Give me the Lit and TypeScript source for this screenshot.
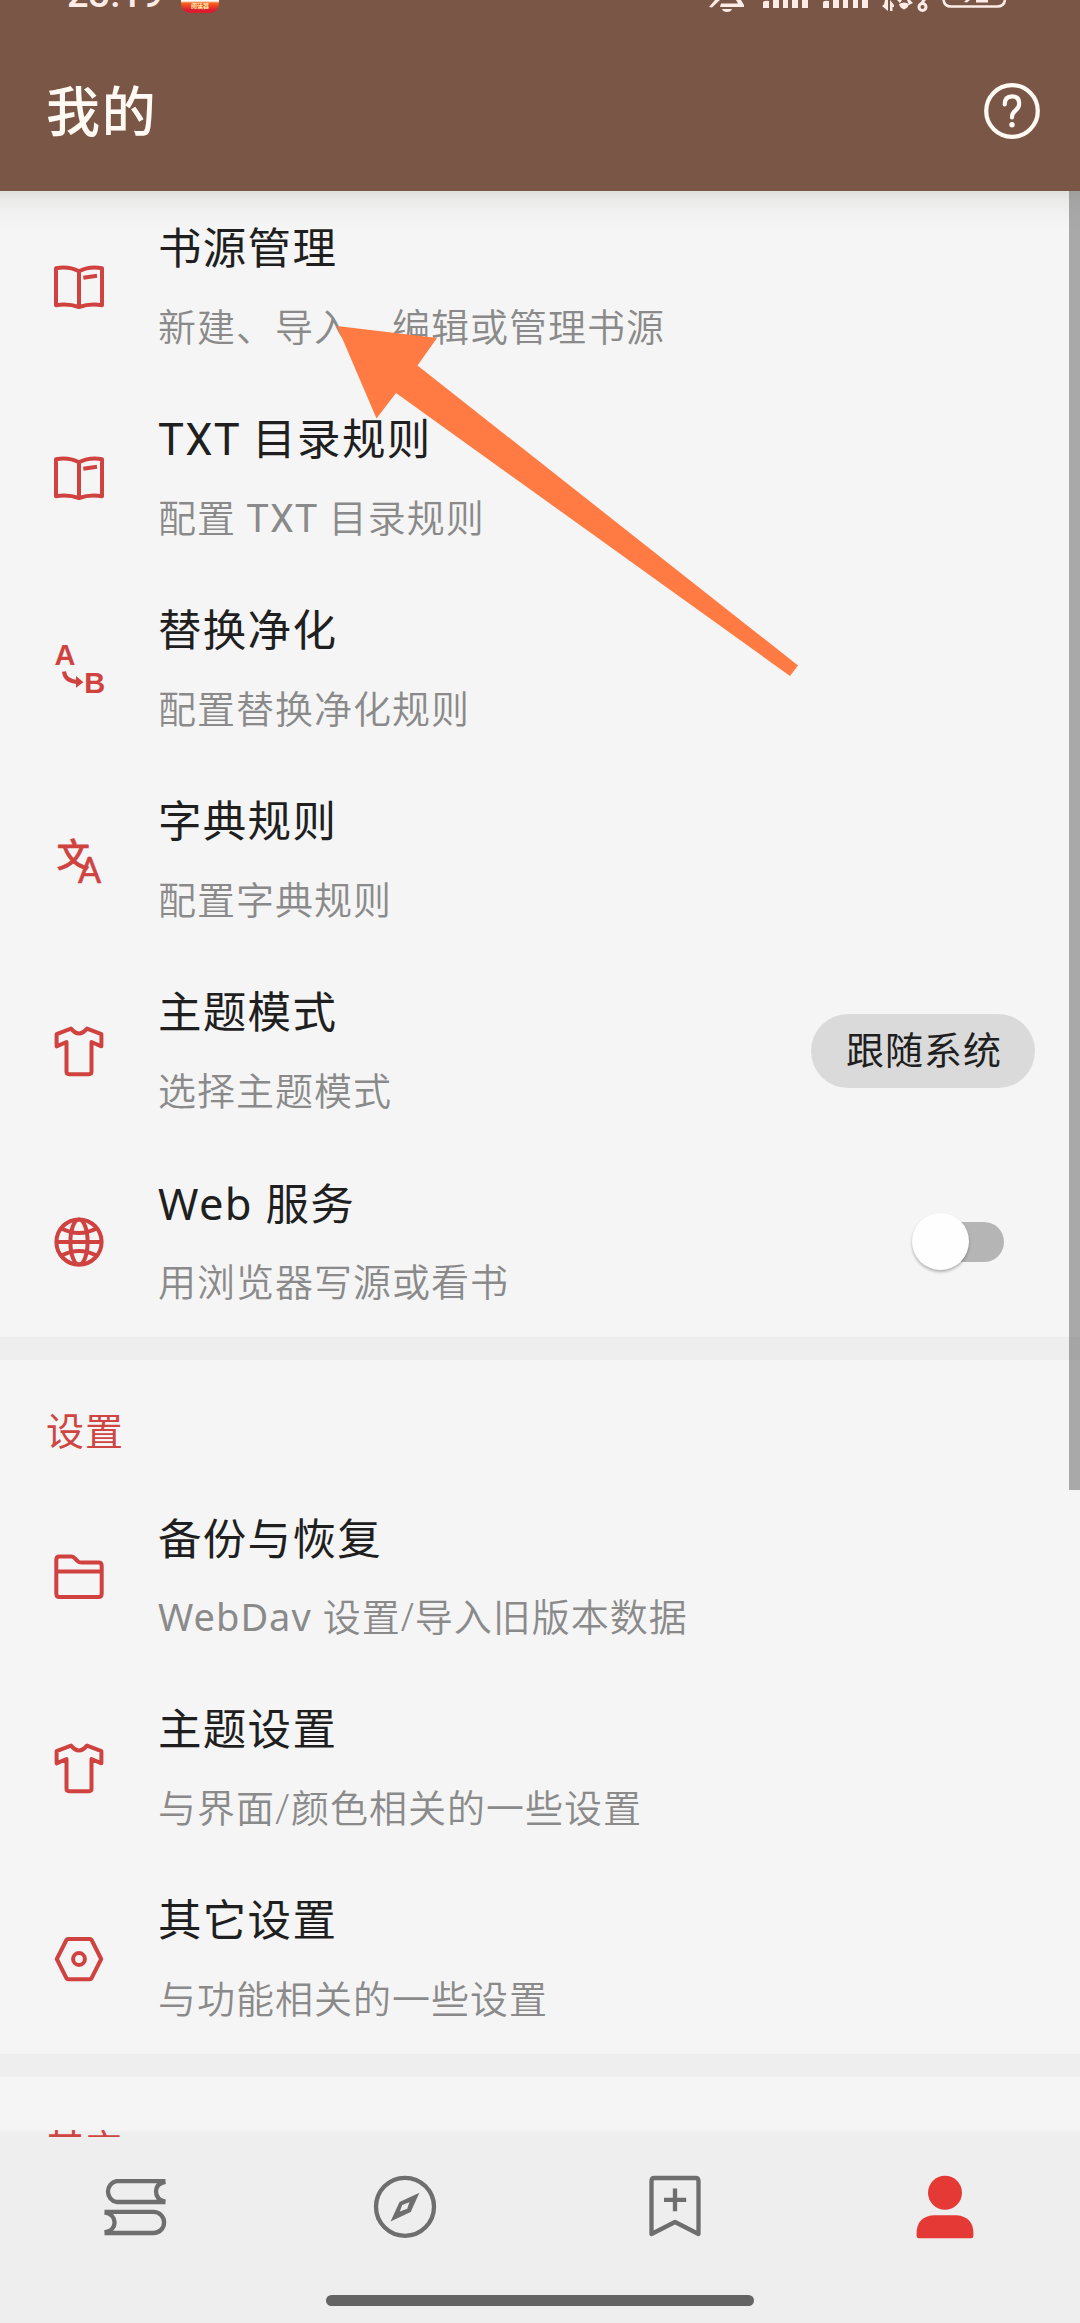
import { LitElement, html, css, svg, nothing, type TemplateResult } from "lit";
import { customElement, property } from "lit/decorators.js";
import { classMap } from "lit/directives/class-map.js";

type Row = { icon: string; title: string; note: string; control?: "pill" | "switch"; wide?: boolean };

const shirt = svg`<path d="M19 4.6Q27 14.2 35 4.6L49.4 10.2V22.3L39.5 18V47.6Q39.5 50.2 37 50.2H17Q14.5 50.2 14.5 47.6V18L4.6 22.3V10.2Z"/>`;

const rowIcons: Record<string, unknown> = {
  book: svg`<path d="M4 8.3C12 6.8 20 7.8 27 11.2C34 7.8 42 6.8 50 8.3V45.2C42 44 34 44.6 27 47C20 44.6 12 44 4 45.2ZM27 11.2V47"/><path d="M31.3 17.8L45 15.8"/>`,
  replace: svg`<text class="bold" x="2.6" y="22.8">A</text><text class="bold" x="32.2" y="51.3">B</text><path d="M12 29.5Q13 39 25 40"/><path class="solid" d="M24 34L31.4 40.2L24 45.8Z"/>`,
  translate: svg`<text class="wen" x="4.8" y="34">文</text><text class="latin" x="25.6" y="50">A</text>`,
  shirt,
  globe: svg`<circle cx="27" cy="27" r="22.6"/><ellipse cx="27" cy="27" rx="8.6" ry="22.6"/><path d="M4 27H50M9.5 13.5Q27 22.5 44.5 13.5M9.5 40.5Q27 31.5 44.5 40.5"/>`,
  folder: svg`<path d="M7.5 6.6H19.5Q21.5 6.6 23.5 9L25.5 11Q26.8 12.6 29.5 12.6H46.5Q49.7 12.6 49.7 16V43.5Q49.7 47 46.5 47H7.5Q4.3 47 4.3 43.5V10Q4.3 6.6 7.5 6.6ZM4.3 21.5H49.7"/>`,
  nut: svg`<path d="M16 7H38Q39 7 39.6 8L49.2 27L39.6 46.2Q39 47.2 38 47.2H16Q15 47.2 14.4 46.2L4.8 27L14.4 8Q15 7 16 7Z"/><circle cx="27" cy="27" r="5.9"/>`,
};

const tools: Row[] = [
  { icon: "book", title: "书源管理", note: "新建、导入、编辑或管理书源" },
  { icon: "book", title: "TXT 目录规则", note: "配置 TXT 目录规则" },
  { icon: "replace", title: "替换净化", note: "配置替换净化规则" },
  { icon: "translate", title: "字典规则", note: "配置字典规则" },
  { icon: "shirt", title: "主题模式", note: "选择主题模式", control: "pill" },
  { icon: "globe", title: "Web 服务", note: "用浏览器写源或看书", control: "switch", wide: true },
];

const settings: Row[] = [
  { icon: "folder", title: "备份与恢复", note: "WebDav 设置/导入旧版本数据", wide: true },
  { icon: "shirt", title: "主题设置", note: "与界面/颜色相关的一些设置" },
  { icon: "nut", title: "其它设置", note: "与功能相关的一些设置" },
];

/** Latin words keep the regular weight inside the lighter note text. */
const withLatin = (text: string) =>
  text.split(/([A-Za-z]+)/).map((part, i) => (i % 2 ? html`<span class="word">${part}</span>` : part));

@customElement("pref-row")
class PrefRow extends LitElement {
  @property({ attribute: false }) row!: Row;

  static styles = css`
    :host { display: flex; align-items: center; height: 191px; box-sizing: border-box; padding: 0 45px 0 52px; }
    .icon { width: 54px; height: 54px; flex: none; overflow: visible; fill: none; stroke: #d0423f; stroke-width: 4; stroke-linejoin: round; }
    .icon text { fill: #d0423f; stroke: none; }
    .bold { font: 700 29px "Liberation Sans", sans-serif; }
    .icon .latin { font: 400 37px Roboto, sans-serif; stroke: #d0423f; stroke-width: 0.5; }
    .icon .wen { font: 500 33px "Noto Sans CJK SC", sans-serif; stroke: #d0423f; stroke-width: 0.7; }
    .icon .solid { fill: #d0423f; stroke: none; }
    .texts { display: flex; flex-direction: column; gap: 22px; flex: 1; margin-left: 52px; padding-top: 5px; white-space: nowrap; }
    .texts.wide { font-family: "Noto Sans", "Noto Sans CJK SC", sans-serif; padding-top: 0; }
    .title { font-size: 43.5px; line-height: 56px; letter-spacing: 1.3px; color: #1f1f1f; }
    .note { font-size: 38px; line-height: 56px; letter-spacing: 1px; color: #8a8a8a; font-weight: 350; }
    .word { font-weight: 400; }
    .pill { display: flex; align-items: center; justify-content: center; width: 224px; height: 74px; box-sizing: border-box; padding: 0 0 7px 2px; border-radius: 37px; background: #dadada; color: #1f1f1f; font-size: 38px; letter-spacing: 1px; }
    .switch { display: flex; align-items: center; justify-content: flex-start; width: 84px; height: 40px; margin-right: 31px; border-radius: 20px; background: #b5b5b5; }
    .thumb { width: 57px; height: 57px; flex: none; margin-left: -8px; border-radius: 50%; background: #fefefe; box-shadow: 0 2px 3px rgba(0, 0, 0, 0.28); }
  `;

  render() {
    const { icon, title, note, control, wide = false } = this.row;
    return html`
      <svg class="icon" viewBox="0 0 54 54">${rowIcons[icon]}</svg>
      <div class=${classMap({ texts: true, wide })}>
        <div class="title">${title}</div>
        <div class="note">${withLatin(note)}</div>
      </div>
      ${control === "pill" ? html`<div class="pill">跟随系统</div>` : nothing}
      ${control === "switch" ? html`<div class="switch"><div class="thumb"></div></div>` : nothing}
    `;
  }
}

@customElement("app-root")
class AppRoot extends LitElement {
  static styles = css`
    :host { display: block; font-family: Roboto, "Noto Sans CJK SC", sans-serif; }
    .screen { position: relative; display: flex; flex-direction: column; width: 1080px; height: 2323px; overflow: hidden; background: #f5f5f5; }
    .top { display: flex; flex-direction: column; flex: none; height: 191px; background: #7a5646; color: #fffaf3; }
    .status { display: flex; height: 30px; flex: none; overflow: hidden; align-items: flex-start; color: #ffece6; }
    .clock { margin: -28px 0 0 67px; width: 114px; font-size: 38px; line-height: 45px; font-weight: 500; }
    .badge { display: flex; align-items: flex-end; justify-content: center; width: 38px; height: 36px; margin-top: -23px; border-radius: 9px; box-sizing: border-box; padding-bottom: 4px; background: linear-gradient(#fff 0 24px, #f6631d 26px, #dd1c30 33px); color: #ffe9a8; font-size: 6px; line-height: 7px; font-weight: 700; }
    .signals { margin-left: 487px; width: 302px; height: 14px; flex: none; }
    .bar { display: flex; align-items: center; justify-content: space-between; height: 161px; padding: 0 40px 0 46px; }
    .name { font-size: 54px; line-height: 80px; padding-top: 6px; font-weight: 500; letter-spacing: 1.8px; }
    .help { width: 56px; height: 56px; }
    .list { flex: none; height: 1946px; overflow: hidden; background: linear-gradient(#dfe0dc 0, #eaeae9 9px, #f2f2f2 24px, #f5f5f5 38px, #f5f5f5 1938px, #eeeeee 1942px); }
    .gap { height: 23px; background: #eeeeee; }
    .category { height: 121px; line-height: 56px; padding: 44px 46px 0; box-sizing: border-box; font-size: 38px; letter-spacing: 1px; color: #cf4542; }
    .nav { display: grid; grid-template-columns: repeat(4, 270px); grid-template-rows: 70px 11px; row-gap: 53px; justify-items: center; height: 186px; flex: none; box-sizing: border-box; padding-top: 35px; background: #eeeeee; }
    .tab { width: 70px; height: 70px; fill: none; stroke: #6e6e6e; stroke-width: 4.3; stroke-linejoin: round; }
    .tab .fill { fill: #6e6e6e; stroke: none; }
    .tab.on { fill: #e53935; stroke: none; }
    .home { grid-column: 1 / -1; width: 428px; height: 11px; border-radius: 6px; background: #646464; }
    .thumb { position: absolute; right: 0; top: 191px; width: 11px; height: 1299px; background: rgba(90, 90, 90, 0.49); }
    .arrow { position: absolute; left: 330px; top: 320px; width: 480px; height: 370px; fill: #ff7b43; }
  `;

  private rows(items: Row[]): TemplateResult[] {
    return items.map((r) => html`<pref-row .row=${r}></pref-row>`);
  }

  render() {
    return html`
      <div class="screen">
        <header class="top">
          <div class="status">
            <div class="clock">23:19</div>
            <div class="badge">阅读器</div>
            <svg class="signals" viewBox="706 0 302 14" fill="#ffece6">
              <path d="M709 7L715 0H720L712 7.5ZM721 3.5H738L736 0H741L744 5V7H720ZM722 9H732Q731 12 727 12Q723 12 722 9Z"/>
              <path d="M763 3Q763 0 769 1V8H763ZM773 0H779V8H773ZM783 0H788V8H783ZM792 0H798V8H792ZM802 0H808V8H802Z"/>
              <path d="M823 3Q823 0 829 1V8H823ZM833 0H839V8H833ZM843 0H848V8H843ZM853 0H858V8H853ZM862 0H868V8H862Z"/>
              <path d="M885 0H888V11L882 6L884 4.5ZM890 11V0L894 5V7H892.5V11ZM897 0H902L900 3ZM907 0H910L913 3L909 5Z"/>
              <path d="M899 4Q904 1 909 4Q908 8 904 9.5Q900 8 899 4Z"/>
              <circle cx="922.5" cy="7" r="3.5" fill="none" stroke="#ffece6" stroke-width="3"/>
              <path d="M919 6L922 0H926L922.5 4Z"/>
              <path d="M943.5 0Q944.5 6.5 951 6.5H997Q1004 6.5 1005 0" fill="none" stroke="#ffece6" stroke-width="2.6"/>
              <path d="M964 2L966 0H970L967 2.5ZM976 0H988V2.5H976Z"/>
            </svg>
          </div>
          <div class="bar">
            <div class="name">我的</div>
            <svg class="help" viewBox="0 0 56 56" fill="none" stroke="#fffaf3" stroke-width="4.2" stroke-linecap="round">
              <circle cx="28" cy="28" r="25.8"/>
              <path d="M20.7 21.5Q20.7 13.4 28 13.4Q35.2 13.4 35.2 20.7Q35.2 24.5 31.5 27.5Q28 30.2 28 34.5"/>
              <circle cx="28" cy="41.8" r="2.7" fill="#fffaf3" stroke="none"/>
            </svg>
          </div>
        </header>
        <main class="list">
          ${this.rows(tools)}
          <div class="gap"></div>
          <div class="category">设置</div>
          ${this.rows(settings)}
          <div class="gap"></div>
          <div class="category">其它</div>
        </main>
        <nav class="nav">
          <svg class="tab" viewBox="0 0 70 70"><path d="M65.5 9.2H16.5A10.6 10.6 0 0 0 16.5 30H65.5M65.5 9.8C58.5 11 56 15 56 19.6S58.5 28.4 65.5 29.6M4.5 39.8H53.5A10.6 10.6 0 0 1 53.5 61H4.5M4.5 40.4C11.5 41.6 14.6 46 14.6 50.4S11.5 59.2 4.5 60.4"/></svg>
          <svg class="tab" viewBox="0 0 70 70"><circle cx="35" cy="34.8" r="29"/><path class="fill" fill-rule="evenodd" d="M49.4 20.7L40.7 40L20.5 49.4L29.5 30ZM39.4 30.2L32.2 33L29.8 39.6L37.2 36.8Z"/></svg>
          <svg class="tab" viewBox="0 0 70 70"><path d="M14.5 6H55.5Q58.5 6 58.5 9V62L35 50L11.5 62V9Q11.5 6 14.5 6Z"/><path d="M24 27.9H46.2M35 16.4V39.3"/></svg>
          <svg class="tab on" viewBox="0 0 70 70"><circle cx="35" cy="20.8" r="17"/><path d="M23.5 43.2H46.5Q63.4 44.5 63.4 61.5V64Q63.4 66.3 61 66.3H9Q6.6 66.3 6.6 64V61.5Q6.6 44.5 23.5 43.2Z"/></svg>
          <div class="home"></div>
        </nav>
        <div class="thumb"></div>
        <svg class="arrow" viewBox="330 320 480 370"><path d="M337 326L437 338L417.5 365.5L798 665.5L790 676L396 393L376.5 418.5Z"/></svg>
      </div>
    `;
  }
}
